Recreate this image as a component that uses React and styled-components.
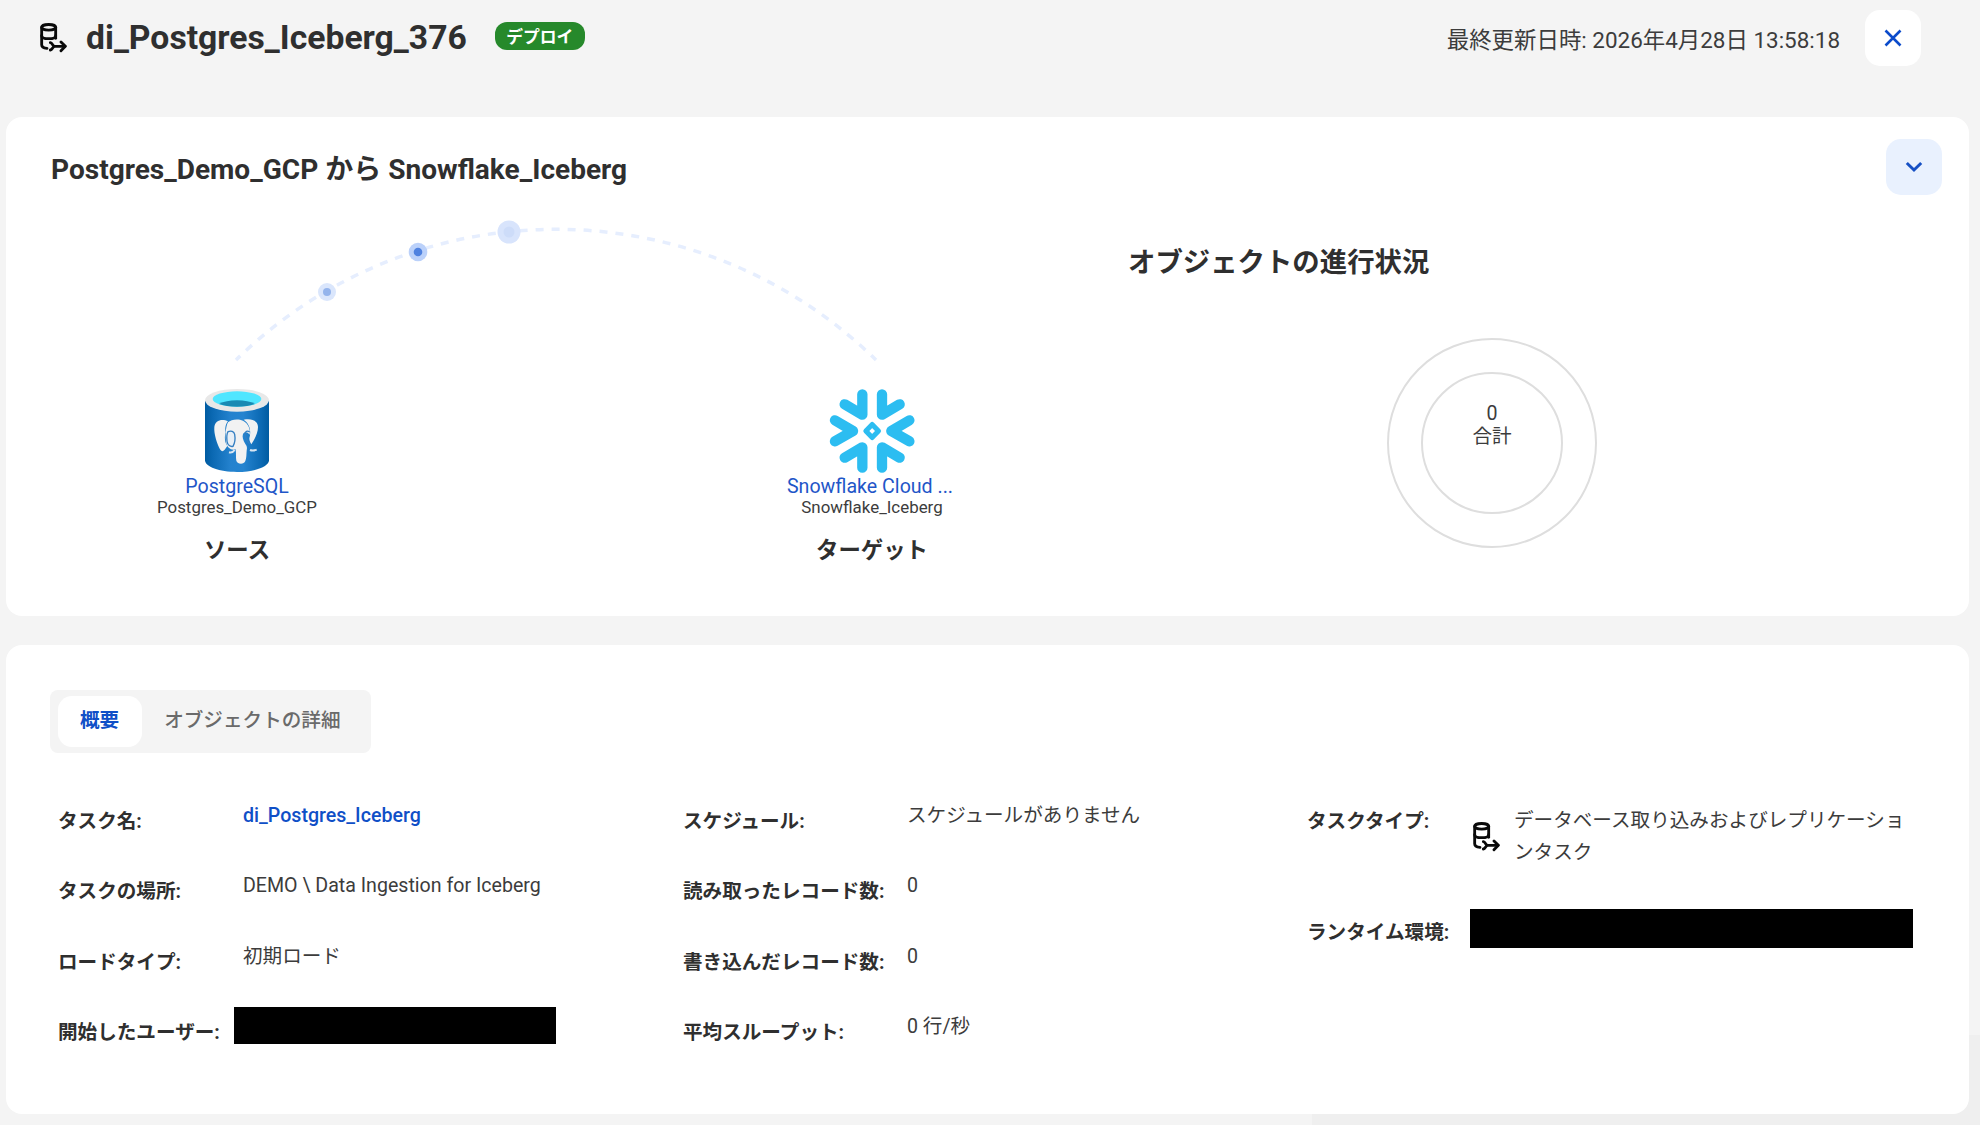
import { useState } from "react";
import styled, { createGlobalStyle } from "styled-components";

const overviewColumns = [
  {
    labelWidth: 185,
    width: 625,
    rows: [
      { label: "タスク名:", value: "di_Postgres_Iceberg", type: "link" },
      { label: "タスクの場所:", value: "DEMO \\ Data Ingestion for Iceberg" },
      { label: "ロードタイプ:", value: "初期ロード" },
      { label: "開始したユーザー:", type: "redacted", size: [322, 37], offset: [10, -9] },
    ],
  },
  {
    labelWidth: 224,
    width: 624,
    rows: [
      { label: "スケジュール:", value: "スケジュールがありません" },
      { label: "読み取ったレコード数:", value: "0" },
      { label: "書き込んだレコード数:", value: "0" },
      { label: "平均スループット:", value: "0 行/秒" },
    ],
  },
  {
    labelWidth: 165,
    width: 610,
    rows: [
      {
        label: "タスクタイプ:",
        value: "データベース取り込みおよびレプリケーションタスク",
        type: "task",
      },
      { label: "ランタイム環境:", type: "redacted", size: [443, 39], offset: [12, -2] },
    ],
  },
];

const dots = [
  { x: 107, y: 82, halo: 9, haloColor: "#dae6fc", core: 4, coreColor: "#94b4ec" },
  { x: 198, y: 42, halo: 9.3, haloColor: "#bbd1fa", core: 4.3, coreColor: "#4f82e0" },
  { x: 289, y: 22, halo: 11.5, haloColor: "#d8e4fc", core: 5.5, coreColor: "#cddcf9" },
];

function IngestionIcon() {
  return (
    <svg width="28" height="30" viewBox="30 27 84 90" fill="none" stroke="#0a0a0a" strokeWidth="8.5" strokeLinecap="round" strokeLinejoin="round">
      <ellipse cx="59" cy="40" rx="21" ry="8.5" />
      <path d="M38 40v52c0 6 7 10 16 11" />
      <path d="M80 40v33" />
      <path d="M38 65c0 6 9 9 21 9s21-3 21-9" />
      <path d="M64 86c7 1 6 11 14 11h30M64 108c7-1 6-11 14-11" />
      <path d="M96 84l13 13-13 13" />
    </svg>
  );
}

function CloseIcon() {
  return (
    <svg width="18" height="18" viewBox="0 0 18 18" stroke="#0b4bcb" strokeWidth="2.6">
      <path d="M1.5 1.5l15 15M16.5 1.5l-15 15" />
    </svg>
  );
}

function ChevronIcon() {
  return (
    <svg width="18" height="12" viewBox="0 0 18 12" fill="none" stroke="#1650c4" strokeWidth="3">
      <path d="M1.8 2l7.2 7 7.2-7" />
    </svg>
  );
}

function PostgresLogo() {
  return (
    <svg width="66" height="84" viewBox="27 26 198 252">
      <defs>
        <linearGradient id="pgBody" x1="0" x2="1">
          <stop offset="0" stopColor="#005ba1" />
          <stop offset="0.12" stopColor="#0b69b3" />
          <stop offset="0.4" stopColor="#2482ce" />
          <stop offset="0.6" stopColor="#2584d0" />
          <stop offset="0.88" stopColor="#0b69b3" />
          <stop offset="1" stopColor="#005ba1" />
        </linearGradient>
      </defs>
      <path d="M30 62v178c0 19 43 35 96 35s96-16 96-35V62z" fill="url(#pgBody)" />
      <ellipse cx="126" cy="60" rx="96" ry="34" fill="#e8e8e8" />
      <ellipse cx="126" cy="56" rx="73" ry="23" fill="#50e6ff" />
      <path d="M72 71c13-7 32-11 54-11s41 4 54 11c-13 5-32 8-54 8s-41-3-54-8z" fill="#198ab3" />
      <g fill="#f2f2f2">
        <path d="M91 120c-17-4-31 4-33 20-2 20 9 53 17 67 4 7 9 7 14 1l8-11c-8-10-9-27-5-41-3-14 1-27 7-33z" />
        <path d="M146 118c24-5 43 3 43 22 0 17-10 38-20 52-4-6-6-11-6-18 6-21 2-43-17-56z" />
        <path d="M99 126c9-9 30-12 45-5 16 8 23 26 20 42-6-9-16-10-20-2-3 8 0 19 7 30 5 7 6 10 4 20-1 10 0 21-4 31-5 12-24 10-27-1-2-9 0-22-2-34-13 4-25-4-28-18-3-17-3-49 5-63z" />
      </g>
      <path d="M99 154c9-4 18-1 20 8 2 11 1 25-5 36-8 2-16-3-18-15-1-10-2-21 3-29z" fill="#e8eff6" stroke="#347fc2" strokeWidth="4" />
      <path d="M164 155c-7-5-14-2-14 6 0 10 6 20 14 30" fill="none" stroke="#347fc2" strokeWidth="4" />
      <path d="M102 216c7 2 13-1 17-7M165 209c7 3 13 2 20-1" fill="none" stroke="#d9e6f2" strokeWidth="6" />
    </svg>
  );
}

function SnowflakeLogo() {
  return (
    <svg width="86" height="84" viewBox="27 26 258 252" fill="none" stroke="#2cbdf1" strokeWidth="31" strokeLinecap="round" strokeLinejoin="round">
      <path d="M127 42v61L74 72" />
      <path d="M186 42v61l53-31" />
      <path d="M127 262v-61l-53 31" />
      <path d="M186 262v-61l53 31" />
      <path d="M45 120l54 32-54 31" />
      <path d="M268 120l-54 32 54 31" />
      <path d="M156.5 132.5l19 19.5-19 19.5-19-19.5z" strokeWidth="15" />
    </svg>
  );
}

function FlowArc() {
  return (
    <svg width="664" height="164" viewBox="0 0 664 164">
      <path d="M16 150A457 457 0 0 1 656 150" fill="none" stroke="#e6eefe" strokeWidth="3.5" strokeDasharray="8 8" strokeDashoffset="2" />
      {dots.map((dot) => (
        <g key={dot.x}>
          <circle cx={dot.x} cy={dot.y} r={dot.halo} fill={dot.haloColor} />
          <circle cx={dot.x} cy={dot.y} r={dot.core} fill={dot.coreColor} />
        </g>
      ))}
    </svg>
  );
}

function DetailValue({ row }) {
  if (row.type === "redacted") {
    return <Redacted $size={row.size} $offset={row.offset} />;
  }
  if (row.type === "link") {
    return <ValueLink href="#">{row.value}</ValueLink>;
  }
  if (row.type === "task") {
    return (
      <TaskType>
        <IngestionIcon />
        <TaskTypeName>{row.value}</TaskTypeName>
      </TaskType>
    );
  }
  return <Value>{row.value}</Value>;
}

function App() {
  const [tab, setTab] = useState("概要");

  return (
    <Page>
      <GlobalStyle />
      <Header>
        <IngestionIcon />
        <JobName>di_Postgres_Iceberg_376</JobName>
        <Badge>デプロイ</Badge>
        <Updated>最終更新日時: 2026年4月28日 13:58:18</Updated>
        <IconButton aria-label="閉じる">
          <CloseIcon />
        </IconButton>
      </Header>

      <FlowCard>
        <CardHeader>
          <CardTitle>Postgres_Demo_GCP から Snowflake_Iceberg</CardTitle>
          <IconButton $tinted aria-label="折りたたむ">
            <ChevronIcon />
          </IconButton>
        </CardHeader>
        <FlowBody>
          <Diagram>
            <FlowArc />
            <Endpoints>
              <Endpoint>
                <PostgresLogo />
                <EndpointType href="#">PostgreSQL</EndpointType>
                <EndpointName>Postgres_Demo_GCP</EndpointName>
                <EndpointRole>ソース</EndpointRole>
              </Endpoint>
              <Endpoint>
                <SnowflakeLogo />
                <EndpointType href="#" $truncated>
                  Snowflake Cloud ...
                </EndpointType>
                <EndpointName>Snowflake_Iceberg</EndpointName>
                <EndpointRole>ターゲット</EndpointRole>
              </Endpoint>
            </Endpoints>
          </Diagram>
          <Progress>
            <ProgressTitle>オブジェクトの進行状況</ProgressTitle>
            <OuterRing>
              <InnerRing>
                <span>0</span>
                <span>合計</span>
              </InnerRing>
            </OuterRing>
          </Progress>
        </FlowBody>
      </FlowCard>

      <OverviewCard>
        <Tabs>
          {["概要", "オブジェクトの詳細"].map((name) => (
            <Tab key={name} $active={tab === name} onClick={() => setTab(name)}>
              {name}
            </Tab>
          ))}
        </Tabs>
        <Details>
          {overviewColumns.map((column, index) => (
            <Column key={index} $width={column.width}>
              {column.rows.map((row) => (
                <Row key={row.label} $labelWidth={column.labelWidth} $tall={row.type === "task"}>
                  <Label>{row.label}</Label>
                  <DetailValue row={row} />
                </Row>
              ))}
            </Column>
          ))}
        </Details>
      </OverviewCard>
    </Page>
  );
}

const GlobalStyle = createGlobalStyle`
  * {
    box-sizing: border-box;
  }

  body {
    margin: 0;
    background: #f4f4f4;
    color: #2f2f2f;
    font-family: Roboto, "Noto Sans CJK JP", sans-serif;
  }

  button {
    border: none;
    padding: 0;
    font-family: inherit;
    cursor: pointer;
  }

  svg {
    display: block;
    flex-shrink: 0;
  }
`;

const Page = styled.div`
  width: 1980px;
  height: 1125px;
  padding: 0 11px 0 6px;
  overflow: hidden;
  background: #f4f4f4 linear-gradient(#efefef, #efefef) no-repeat right bottom / 668px 90px;
`;

const Header = styled.header`
  display: flex;
  align-items: center;
  height: 117px;
  padding: 0 48px 42px 33px;
`;

const JobName = styled.h1`
  margin: 0 0 0 19px;
  font-size: 33.7px;
  font-weight: 700;
  line-height: 50px;
`;

const Badge = styled.span`
  height: 28px;
  width: 90px;
  margin: -4px 0 0 28px;
  border-radius: 12px;
  background: #26892b;
  color: #fff;
  font-size: 16.8px;
  font-weight: 700;
  line-height: 30px;
  text-align: center;
`;

const Updated = styled.span`
  margin: 1px 25px 0 auto;
  font-size: 22.45px;
  color: #3c3c3c;
`;

const IconButton = styled.button`
  display: flex;
  justify-content: center;
  align-items: center;
  width: 56px;
  height: 56px;
  border-radius: 15px;
  background: ${({ $tinted }) => ($tinted ? "#e9f1fe" : "#fff")};
`;

const Card = styled.section`
  border-radius: 16px;
  background: #fff;
`;

const FlowCard = styled(Card)`
  height: 499px;
  padding: 22px 27px 0 45px;
`;

const CardHeader = styled.div`
  display: flex;
  justify-content: space-between;
  align-items: center;
`;

const CardTitle = styled.h2`
  margin: 6px 0 0;
  font-size: 28.05px;
  font-weight: 700;
  line-height: 40px;
`;

const FlowBody = styled.div`
  display: flex;
`;

const Diagram = styled.div`
  display: flex;
  flex: none;
  flex-direction: column;
  align-items: center;
  width: 1007px;
  padding-top: 15px;

  > svg {
    margin-right: 5px;
  }
`;

const Endpoints = styled.div`
  display: flex;
  justify-content: space-between;
  width: 835px;
  padding-top: 15px;
`;

const Endpoint = styled.div`
  display: flex;
  flex-direction: column;
  align-items: center;
  width: 200px;
`;

const EndpointType = styled.a`
  margin-top: 3px;
  padding-right: ${({ $truncated }) => ($truncated ? 4 : 0)}px;
  color: #1f56c8;
  font-size: 19.6px;
  line-height: 22px;
  text-decoration: none;
`;

const EndpointName = styled.span`
  font-size: 16.9px;
  line-height: 19px;
  color: #3c3c3c;
`;

const EndpointRole = styled.strong`
  margin-top: 18px;
  font-size: 22.4px;
  font-weight: 700;
  line-height: 31px;
`;

const Progress = styled.div`
  display: flex;
  flex: 1;
  flex-direction: column;
  padding: 48px 0 0 70px;
`;

const ProgressTitle = styled.h3`
  margin: 0;
  font-size: 27.4px;
  font-weight: 600;
  line-height: 40px;
`;

const Ring = styled.div`
  display: flex;
  border: 2px solid #dedede;
  border-radius: 50%;
`;

const OuterRing = styled(Ring)`
  align-items: center;
  justify-content: center;
  width: 210px;
  height: 210px;
  margin: 55px 0 0 259px;
`;

const InnerRing = styled(Ring)`
  flex-direction: column;
  align-items: center;
  width: 142px;
  height: 142px;
  padding-top: 28px;
  color: #3c3c3c;
  font-size: 19.6px;
  line-height: 23px;
`;

const OverviewCard = styled(Card)`
  height: 469px;
  margin-top: 29px;
  padding: 45px 0 0 44px;
`;

const Tabs = styled.div`
  display: flex;
  width: 321px;
  height: 63px;
  padding: 6px 8px;
  border-radius: 8px;
  background: #f4f4f4;
`;

const Tab = styled.button`
  height: 51px;
  padding: 0 23px 1px 22px;
  border-radius: 14px;
  background: ${({ $active }) => ($active ? "#fff" : "transparent")};
  color: ${({ $active }) => ($active ? "#0f4fc7" : "#6a6a6a")};
  font-size: 19.6px;
  font-weight: ${({ $active }) => ($active ? 700 : 500)};
  line-height: 46px;
  white-space: nowrap;
`;

const Details = styled.div`
  display: flex;
  padding: 33px 0 0 8px;
`;

const Column = styled.div`
  flex: none;
  width: ${({ $width }) => $width}px;
`;

const Row = styled.div`
  display: grid;
  grid-template-columns: ${({ $labelWidth }) => $labelWidth}px 1fr;
  height: ${({ $tall }) => ($tall ? 111 : 70.3)}px;
`;

const Label = styled.span`
  font-size: 19.6px;
  font-weight: 700;
  line-height: 72px;
  white-space: nowrap;
`;

const Value = styled.span`
  color: #3c3c3c;
  font-size: 19.6px;
  line-height: 60px;
`;

const ValueLink = styled.a`
  color: #0f4fc7;
  font-size: 19.6px;
  font-weight: 500;
  line-height: 60px;
  text-decoration: none;
`;

const Redacted = styled.span`
  width: ${({ $size }) => $size[0]}px;
  height: ${({ $size }) => $size[1]}px;
  margin-top: ${({ $offset }) => $offset[0]}px;
  margin-left: ${({ $offset }) => $offset[1]}px;
  background: #000;
`;

const TaskType = styled.div`
  display: flex;
  gap: 14px;
  padding-top: 19px;

  svg {
    margin-top: 17px;
  }
`;

const TaskTypeName = styled.span`
  width: 400px;
  color: #3c3c3c;
  font-size: 19.6px;
  line-height: 32px;
  word-break: break-all;
`;

export default App;
